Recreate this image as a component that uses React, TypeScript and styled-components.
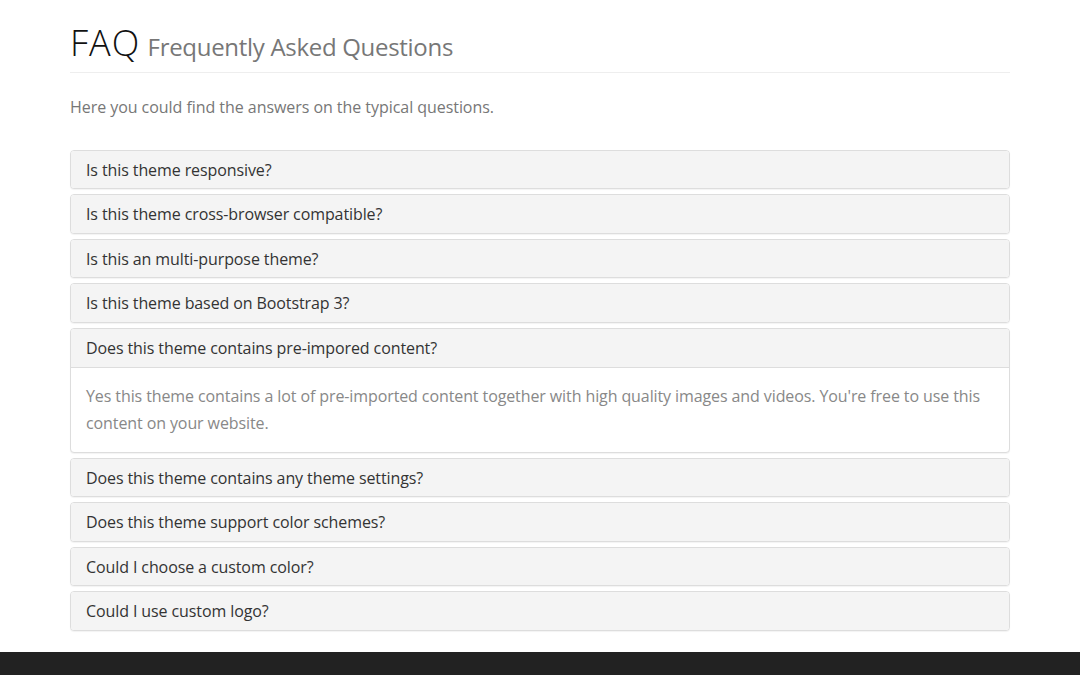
import React, { useState } from "react";
import styled, { createGlobalStyle } from "styled-components";

const Global = createGlobalStyle`
  html, body { margin: 0; padding: 0; background: #fff; }
  body { font-family: "Open Sans", "Liberation Sans", sans-serif; color: #333; }
  * { box-sizing: border-box; }
`;

const Page = styled.div`
  min-height: 675px;
  display: flex;
  flex-direction: column;
`;

const Container = styled.main`
  width: 940px;
  margin: 0 auto;
  padding-bottom: 20px;
`;

const PageHeader = styled.header`
  margin-top: 23px;
  padding-bottom: 9px;
  border-bottom: 1px solid #eee;
`;

const Title = styled.h1`
  margin: 0;
  font-size: 36px;
  line-height: 1.1;
  font-weight: 300;
  color: #111;
  letter-spacing: 1px;
`;

const Sub = styled.small`
  font-size: 24px;
  font-weight: 400;
  color: #777;
  letter-spacing: -0.3px;
  margin-left: -3px;
`;

const Intro = styled.p`
  margin: 21px 0 29px;
  font-size: 16px;
  line-height: 27px;
  color: #777;
  letter-spacing: -0.05px;
`;

const Group = styled.div`
  display: flex;
  flex-direction: column;
  gap: 5px;
`;

const Panel = styled.div`
  border: 1px solid #ddd;
  border-radius: 4px;
  background: #fff;
  box-shadow: 0 1px 1px rgba(0, 0, 0, 0.05);
  overflow: hidden;
`;

const Heading = styled.button<{ $open: boolean }>`
  display: block;
  width: 100%;
  text-align: left;
  background: #f4f4f4;
  border: 0;
  border-bottom: ${(p) => (p.$open ? "1px solid #ddd" : "0")};
  padding: 11px 15px 9px;
  font-family: inherit;
  font-size: 16px;
  line-height: 17.6px;
  letter-spacing: -0.1px;
  color: #333;
  cursor: pointer;
`;

const Body = styled.div`
  padding: 15px;
  font-size: 16px;
  line-height: 27px;
  letter-spacing: -0.1px;
  color: #888;
`;

const Footer = styled.footer`
  margin-top: auto;
  height: 23px;
  background: #222;
`;

const faqs: { q: string; a?: string }[] = [
  { q: "Is this theme responsive?" },
  { q: "Is this theme cross-browser compatible?" },
  { q: "Is this an multi-purpose theme?" },
  { q: "Is this theme based on Bootstrap 3?" },
  {
    q: "Does this theme contains pre-impored content?",
    a: "Yes this theme contains a lot of pre-imported content together with high quality images and videos. You're free to use this content on your website.",
  },
  { q: "Does this theme contains any theme settings?" },
  { q: "Does this theme support color schemes?" },
  { q: "Could I choose a custom color?" },
  { q: "Could I use custom logo?" },
];

export default function App() {
  const [open, setOpen] = useState<number>(4);
  return (
    <Page>
      <Global />
      <Container>
        <PageHeader>
          <Title>
            FAQ <Sub>Frequently Asked Questions</Sub>
          </Title>
        </PageHeader>
        <Intro>Here you could find the answers on the typical questions.</Intro>
        <Group>
          {faqs.map((f, i) => (
            <Panel key={i}>
              <Heading $open={open === i} onClick={() => setOpen(open === i ? -1 : i)}>
                {f.q}
              </Heading>
              {open === i && <Body>{f.a ?? ""}</Body>}
            </Panel>
          ))}
        </Group>
      </Container>
      <Footer />
    </Page>
  );
}
